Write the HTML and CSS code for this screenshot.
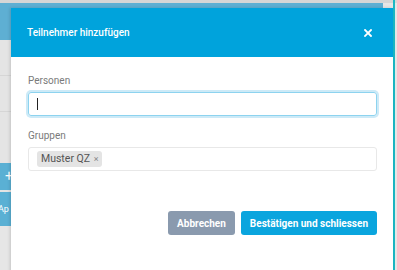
FILE: index.html
```html
<!DOCTYPE html>
<html lang="de">
<head>
  <meta charset="UTF-8">
  <title>Teilnehmer hinzufügen</title>
  <link rel="stylesheet" href="styles.css">
</head>
<body>

  <div class="seite">
    <div class="topbar"></div>
    <div class="band"></div>
    <div class="liste">
      <div class="zeile"></div>
      <div class="zeile"></div>
      <div class="zeile"></div>
      <div class="aktion plus">+</div>
      <div class="aktion">Ap</div>
    </div>
    <div class="rand"></div>
  </div>

  <div class="modal">
    <div class="modal-kopf">
      <h2>Teilnehmer hinzufügen</h2>
      <svg class="schliessen" width="8" height="8" viewBox="0 0 8 8">
        <path d="M1 1 L7 7 M7 1 L1 7" stroke="white" stroke-width="1.8" stroke-linecap="square"/>
      </svg>
    </div>

    <div class="modal-inhalt">
      <label>Personen</label>
      <div class="eingabe fokus"><span class="cursor"></span></div>

      <label>Gruppen</label>
      <div class="eingabe">
        <span class="tag">Muster QZ <span class="tag-x">&times;</span></span>
      </div>

      <div class="knoepfe">
        <button class="btn abbrechen">Abbrechen</button>
        <button class="btn bestaetigen">Bestätigen und schliessen</button>
      </div>
    </div>
  </div>

</body>
</html>
```

FILE: styles.css
```css
* { box-sizing: border-box; margin: 0; padding: 0; }

body {
  font-family: Roboto, "Liberation Sans", Arial, sans-serif;
  background-color: #e6e6e6;
  width: 397px;
  height: 270px;
  overflow: hidden;
  position: relative;
}

.seite {
  height: 270px;
  position: relative;
}

.topbar {
  height: 3px;
  background-color: #d6d6d6;
}

.band {
  height: 37px;
  width: 383px;
  background-color: #5eafd3;
}

.liste {
  width: 11px;
  background-color: #e4e4e4;
}

.zeile {
  height: 36px;
  border-bottom: 1px solid #d6d6d6;
}

.zeile:nth-child(3) {
  height: 51px;
  border-bottom: none;
}

.aktion {
  margin-top: 2px;
  height: 34px;
  background-color: #5ab0d4;
  color: white;
  font-size: 9px;
  line-height: 34px;
  white-space: nowrap;
  text-indent: -2px;
}

.aktion.plus {
  margin-top: 0;
  height: 27px;
  line-height: 27px;
  text-indent: 5px;
  font-size: 14px;
}

.rand {
  position: absolute;
  top: 0;
  left: 393px;
  width: 2px;
  height: 270px;
  background-color: #1cb8c4;
}

.modal {
  position: absolute;
  top: 8px;
  left: 11px;
  width: 382px;
  height: 270px;
  background-color: white;
  box-shadow: -1px 0 3px rgba(0, 0, 0, 0.15);
}

.modal-kopf {
  height: 49px;
  background-color: #00a3dc;
  display: flex;
  align-items: center;
  justify-content: space-between;
  padding: 0 21px 0 16px;
  color: white;
}

.modal-kopf h2 {
  font-size: 10px;
  font-weight: 500;
}

.schliessen {
  margin-top: 1px;
}

.modal-inhalt {
  padding: 18px 16px 0 17px;
  display: flex;
  flex-direction: column;
}

label {
  font-size: 10px;
  line-height: 12px;
  color: #7a7a7a;
  margin-bottom: 5px;
}

.eingabe {
  height: 24px;
  border: 1px solid #e8e8e8;
  border-radius: 3px;
  margin-bottom: 14px;
  display: flex;
  align-items: center;
  padding: 0 8px;
}

.eingabe.fokus {
  border-color: #8dd3ef;
  box-shadow: 0 0 0 2px #cdeaf7;
}

.cursor {
  width: 1px;
  height: 12px;
  background-color: #222;
}

.tag {
  background-color: #e4e4e4;
  border-radius: 3px;
  font-size: 10.5px;
  color: #555;
  padding: 2px 4px;
  line-height: 12px;
}

.tag-x {
  color: #888;
  font-size: 9px;
  margin-left: 1px;
}

.knoepfe {
  display: flex;
  justify-content: flex-end;
  gap: 6px;
  margin-top: 26px;
}

.btn {
  height: 24px;
  border: none;
  border-radius: 3px;
  color: white;
  font-family: Roboto, "Liberation Sans", Arial, sans-serif;
  font-size: 10px;
  font-weight: bold;
  padding: 0 9px;
}

.abbrechen {
  background-color: #8a9aae;
}

.bestaetigen {
  background-color: #0aa5de;
}
```
